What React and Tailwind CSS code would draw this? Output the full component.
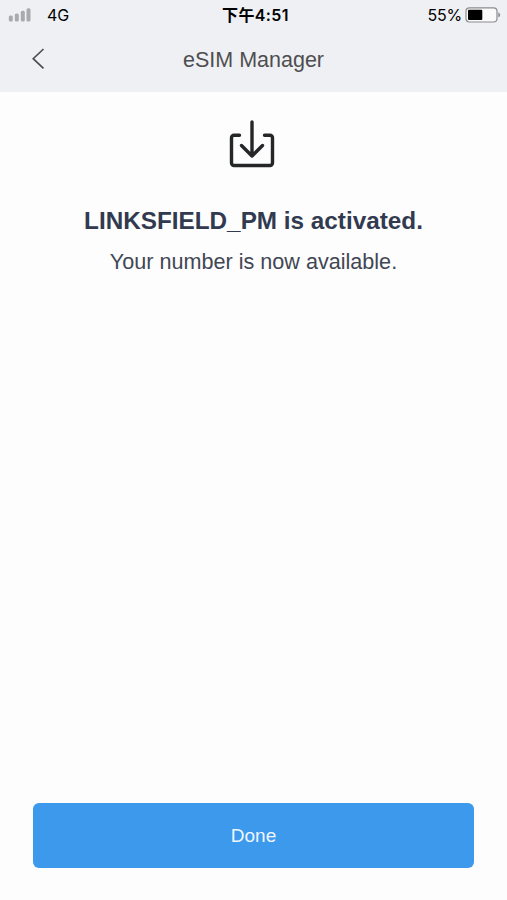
import React from 'react';

const SignalIcon = () => (
    <svg width="24" height="14" viewBox="0 0 24 14" fill="#a9aaac">
        <rect x="0.8" y="7.5" width="4" height="6" rx="1.5" />
        <rect x="6.8" y="5.5" width="4" height="8" rx="1.5" />
        <rect x="12.8" y="2.8" width="4" height="10.7" rx="1.5" />
        <rect x="18.5" y="0.3" width="4" height="13.2" rx="1.5" />
    </svg>
);

const BatteryIcon = () => (
    <svg width="36" height="16" viewBox="0 0 36 16">
        <rect x="1" y="0.8" width="31" height="14.2" rx="3.5" fill="#fafafb" stroke="#8c8c8e" strokeWidth="1.2" />
        <rect x="3" y="2.8" width="14.3" height="10.2" rx="1" fill="#000" />
        <path d="M33.3 5.5c2.4 .6 2.4 4.2 0 4.8z" fill="#8c8c8e" />
    </svg>
);

const BackIcon = () => (
    <svg width="14" height="22" viewBox="0 0 14 22" fill="none" stroke="#4a4b4d" strokeWidth="1.6">
        <path d="M12.5 1L2.200 10.700l10.300 9.700" />
    </svg>
);

const DownloadIcon = () => (
    <svg width="48" height="50" viewBox="0 0 48 50" fill="none" stroke="#252628" strokeWidth="3.4" strokeLinecap="round" strokeLinejoin="round">
        <path d="M11.5 15.2H6a2.5 2.5 0 0 0-2.5 2.5V43a2.5 2.5 0 0 0 2.5 2.5h36a2.5 2.5 0 0 0 2.5-2.5V17.7a2.5 2.5 0 0 0-2.5-2.5h-5.5" />
        <path d="M24 2v34M13.5 25.5L24 36l10.500-10.500" />
    </svg>
);

const StatusBar = () => (
    <div className="grid h-[30px] grid-cols-3 items-center pl-2 pr-1.5 text-black">
        <div className="flex items-center">
            <SignalIcon />
            <span className="ml-[15px] font-[Inter] text-base leading-none">4G</span>
        </div>
        <span className="pl-0.5 text-center font-[Inter,'Noto_Sans_CJK_SC',sans-serif] text-base leading-none font-semibold tracking-[0.4px]">下午4:51</span>
        <div className="flex items-center justify-end">
            <span className="mr-[3px] font-[Inter] text-base leading-none tracking-[-0.2px]">55%</span>
            <BatteryIcon />
        </div>
    </div>
);

const App = () => {
    return (
        <div className="flex h-screen flex-col bg-[#fdfdfd] font-['Liberation_Sans',Arial,sans-serif]">
            <header className="h-[92px] bg-[#eff0f4]">
                <StatusBar />
                <div className="grid h-[58px] grid-cols-[1fr_auto_1fr] items-center">
                    <button className="ml-[31px] justify-self-start">
                        <BackIcon />
                    </button>
                    <h1 className="pt-1 text-[21.5px] leading-none text-[#4e4e50]">eSIM Manager</h1>
                </div>
            </header>
            <main className="flex flex-1 flex-col items-center pt-[28px] text-[#323a50]">
                <div className="mr-[3px]">
                    <DownloadIcon />
                </div>
                <h2 className="mt-[36px] text-[24.3px] leading-[30px] font-bold">LINKSFIELD_PM is activated.</h2>
                <p className="mt-[12px] text-[21.6px] leading-[28px] text-[#414754]">Your number is now available.</p>
            </main>
            <footer className="px-[33px] pb-[32px]">
                <button className="h-[65px] w-full rounded-md bg-[#3c99ec] pt-0.5 text-[19px] text-[#eef7ff]">Done</button>
            </footer>
        </div>
    );
};

export default App;
